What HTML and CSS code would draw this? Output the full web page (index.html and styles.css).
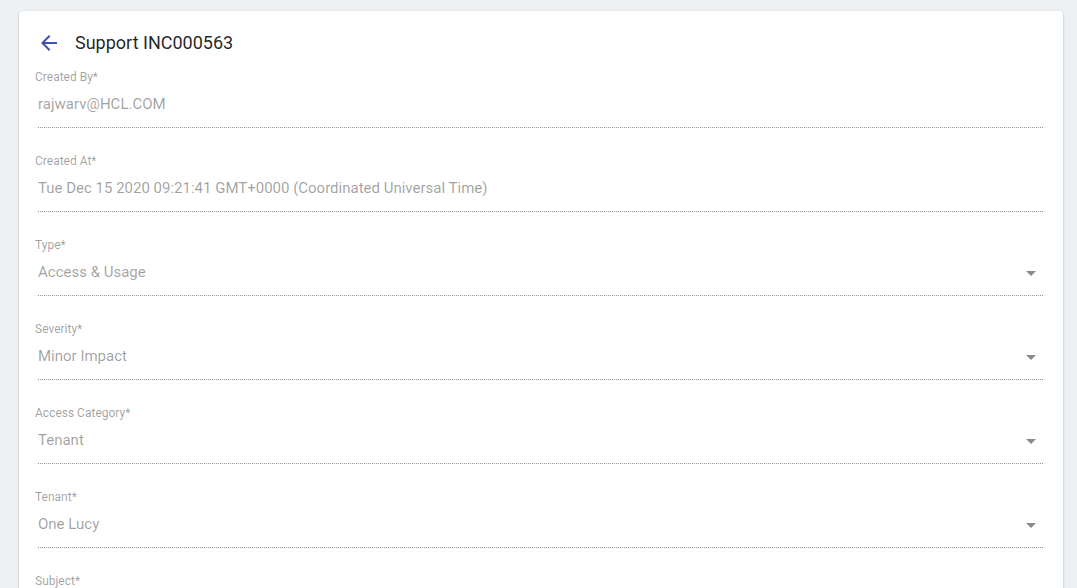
FILE: index.html
```html
<!DOCTYPE html>
<html lang="en">
<head>
<meta charset="utf-8">
<title>Support INC000563</title>
<link rel="stylesheet" href="styles.css">
</head>
<body>
<div class="card">
  <div class="header">
    <svg class="back" viewBox="0 0 24 24" width="24" height="24"><path d="M20 11H7.83l5.59-5.59L12 4l-8 8 8 8 1.41-1.41L7.83 13H20v-2z"/></svg>
    <h1 class="title">Support INC000563</h1>
  </div>
  <div class="field">
    <label class="label">Created By*</label>
    <div class="input"><span class="value">rajwarv@HCL.COM</span></div>
  </div>
  <div class="field">
    <label class="label">Created At*</label>
    <div class="input"><span class="value">Tue Dec 15 2020 09:21:41 GMT+0000 (Coordinated Universal Time)</span></div>
  </div>
  <div class="field">
    <label class="label">Type*</label>
    <div class="input select"><span class="value">Access &amp; Usage</span><svg class="caret" viewBox="0 0 24 24" width="24" height="24"><path d="M7 10l5 5 5-5z"/></svg></div>
  </div>
  <div class="field">
    <label class="label">Severity*</label>
    <div class="input select"><span class="value">Minor Impact</span><svg class="caret" viewBox="0 0 24 24" width="24" height="24"><path d="M7 10l5 5 5-5z"/></svg></div>
  </div>
  <div class="field">
    <label class="label">Access Category*</label>
    <div class="input select"><span class="value">Tenant</span><svg class="caret" viewBox="0 0 24 24" width="24" height="24"><path d="M7 10l5 5 5-5z"/></svg></div>
  </div>
  <div class="field">
    <label class="label">Tenant*</label>
    <div class="input select"><span class="value">One Lucy</span><svg class="caret" viewBox="0 0 24 24" width="24" height="24"><path d="M7 10l5 5 5-5z"/></svg></div>
  </div>
  <div class="field">
    <label class="label">Subject*</label>
    <div class="input"><span class="value">&nbsp;</span></div>
  </div>
</div>
</body>
</html>
```
FILE: styles.css
```css
html, body {
  margin: 0;
  padding: 0;
  overflow: hidden;
  height: 100%;
}
body {
  background: #eef1f4;
  font-family: Roboto, "Liberation Sans", Arial, sans-serif;
  padding: 11px 14px 0 19px;
  box-sizing: border-box;
}
.card {
  background: #fff;
  border-radius: 4px;
  box-shadow: 0 1px 3px rgba(0, 0, 0, 0.2), 0 1px 1px rgba(0, 0, 0, 0.12);
  padding: 20px 20px 20px 16px;
  min-height: 700px;
}
.header {
  display: flex;
  align-items: center;
  height: 24px;
  margin-left: 2px;
  margin-bottom: 15px;
}
.back {
  fill: #3f51b5;
  flex: none;
}
.title {
  margin: 0 0 0 14px;
  font-size: 18px;
  font-weight: 400;
  line-height: 24px;
  color: rgba(0, 0, 0, 0.87);
}
.field {
  display: flex;
  flex-direction: column;
  margin-bottom: 26px;
}
.label {
  font-size: 12px;
  line-height: 14px;
  color: rgba(0, 0, 0, 0.38);
}
.input {
  position: relative;
  margin: 10px 0 0 3px;
  padding: 0 0 13px 0;
  border-bottom: 1px dotted rgba(0, 0, 0, 0.42);
  display: flex;
  align-items: center;
}
.value {
  font-size: 15px;
  line-height: 20px;
  color: rgba(0, 0, 0, 0.38);
}
.caret {
  position: absolute;
  right: 0;
  top: -1px;
  fill: rgba(0, 0, 0, 0.46);
}
```
